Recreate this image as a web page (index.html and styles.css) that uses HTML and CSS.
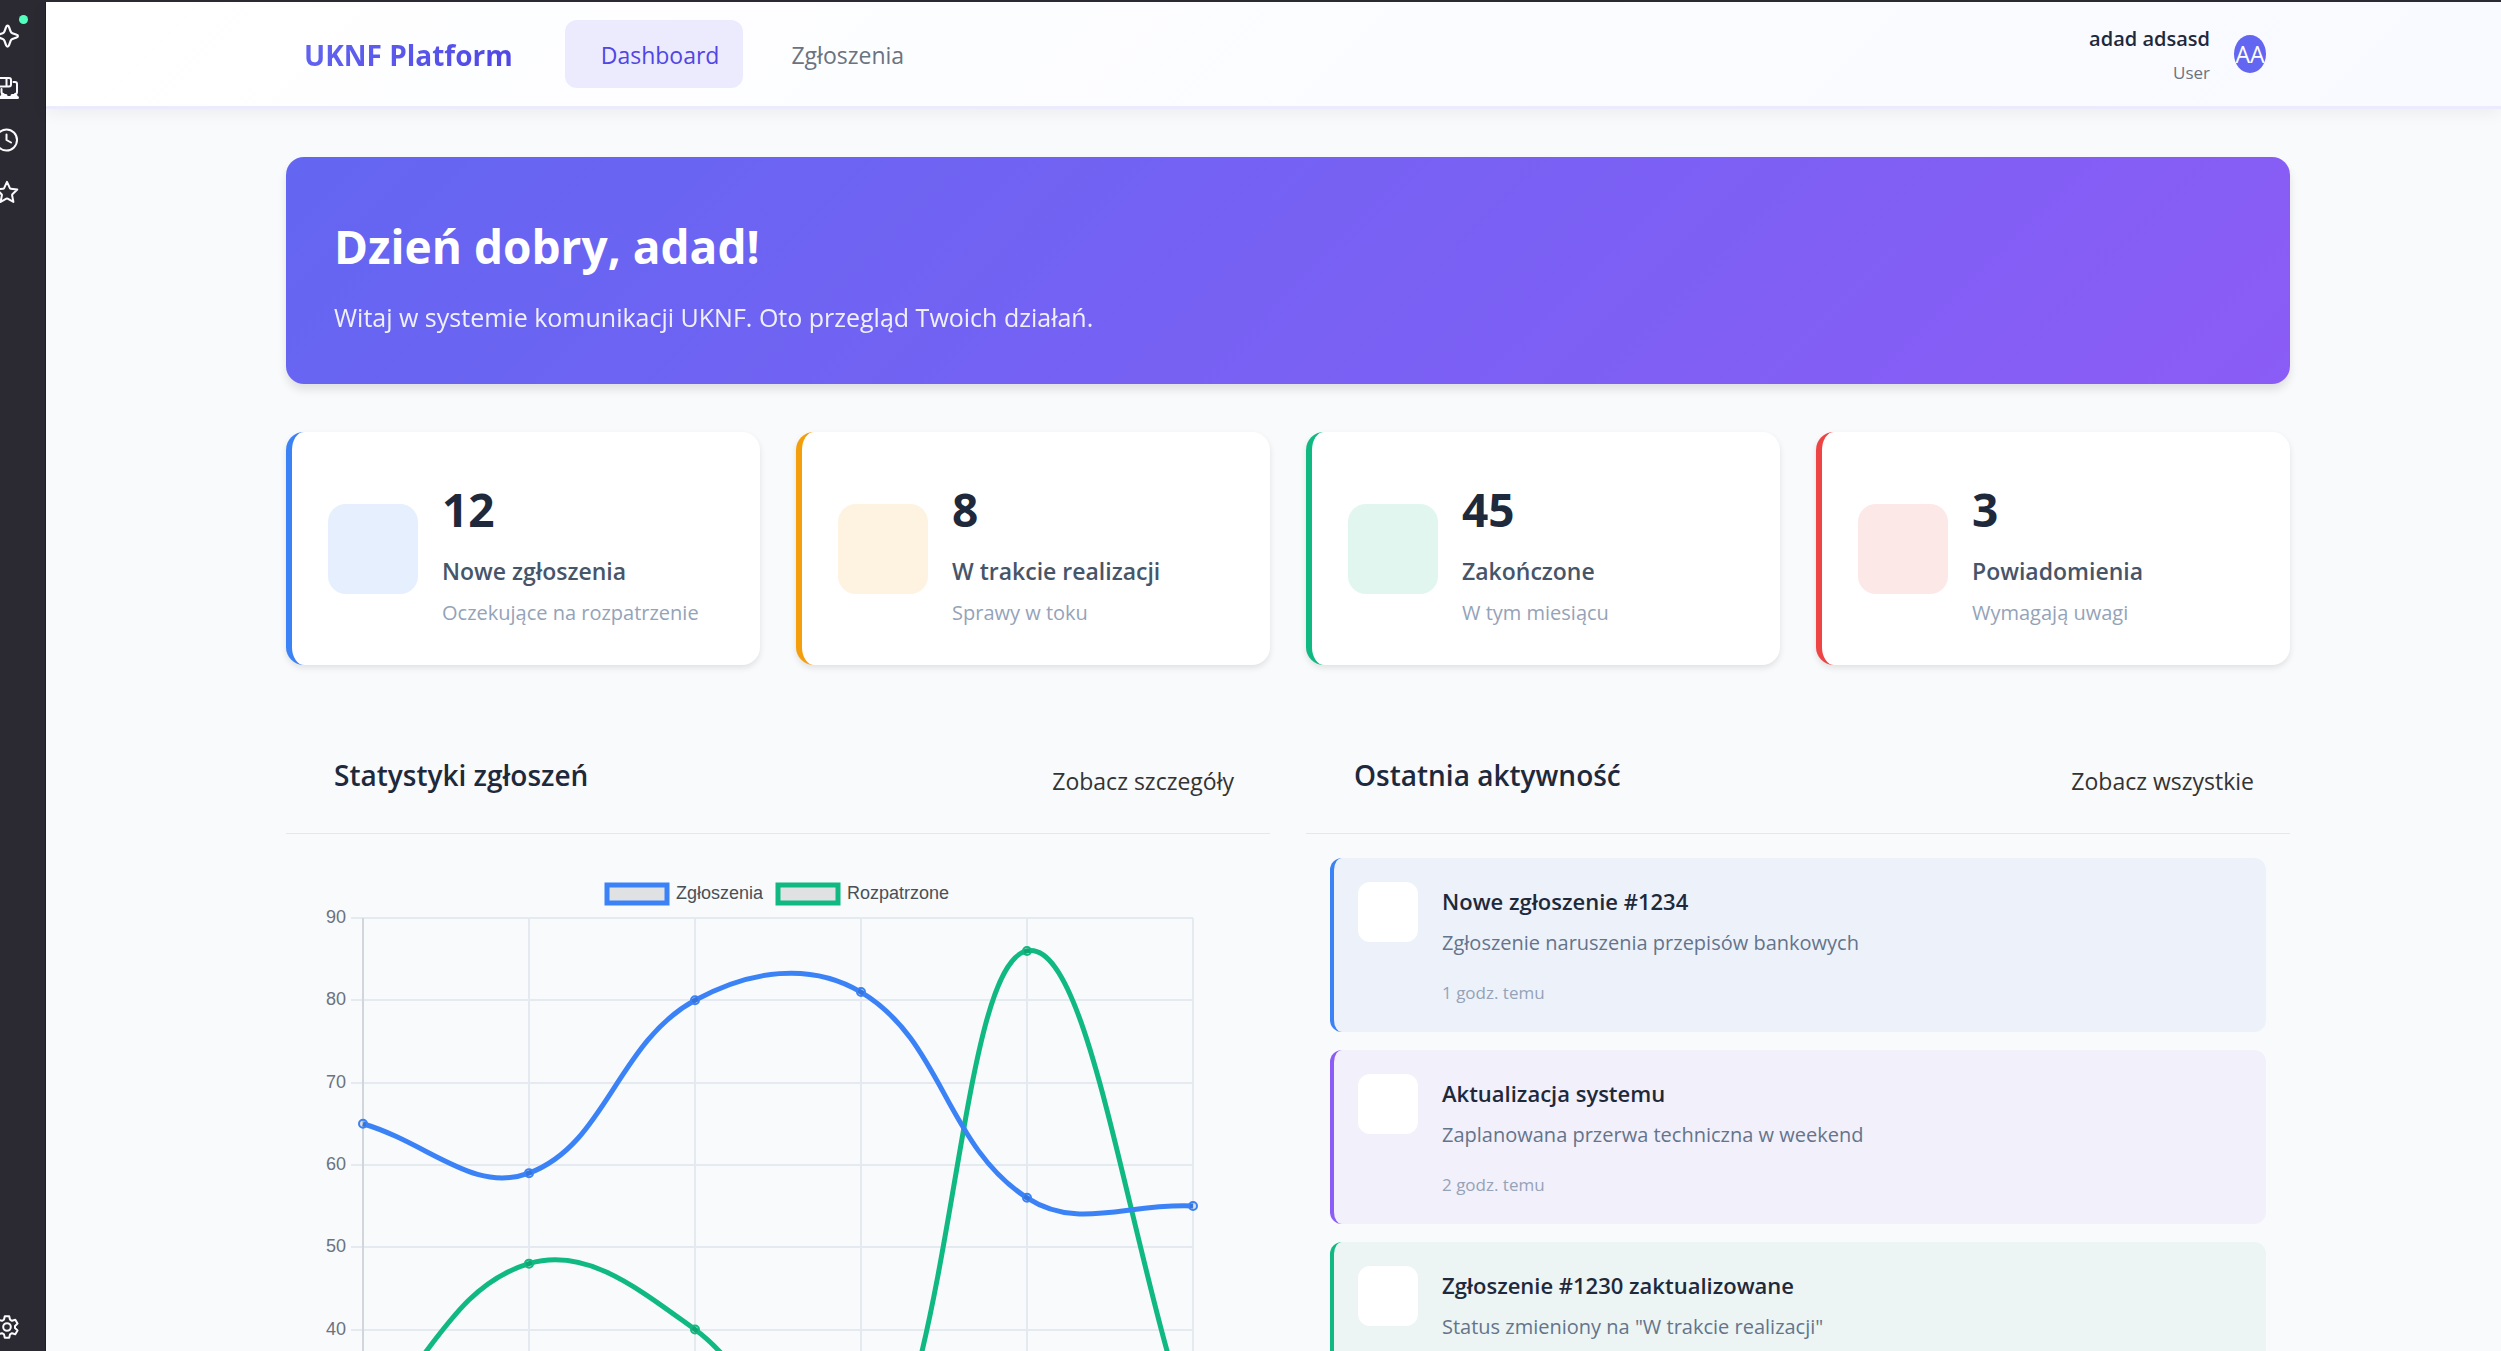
FILE: index.html
```html
<!DOCTYPE html>
<html lang="pl">
<head>
<meta charset="utf-8">
<title>UKNF Platform</title>
<link rel="stylesheet" href="styles.css">
</head>
<body>
<div class="window">
  <aside class="rail">
    <button class="rail-btn" type="button" aria-label="AI">
      <svg class="rail-icon" viewBox="1 1 22 22"><path d="M12.500 2.500c.8 0 1.100.6 1.300 1.200l1.500 4.100c.3.800.800 1.300 1.600 1.600l4 1.500c.7.2 1.100.6 1.100 1.200s-.4 1-1.100 1.200l-4 1.500c-.8.3-1.300.8-1.600 1.600l-1.500 4.100c-.2.6-.5 1.200-1.300 1.200s-1.100-.6-1.300-1.200l-1.500-4.100c-.3-.8-.8-1.300-1.600-1.600l-4-1.500C3.400 13.100 3 12.700 3 12.100s.4-1 1.100-1.200l4-1.500c.8-.3 1.300-.8 1.600-1.600l1.500-4.100c.2-.6.5-1.200 1.300-1.200z"/></svg>
      <span class="rail-dot"></span>
    </button>
    <button class="rail-btn" type="button" aria-label="Urządzenia">
      <svg class="rail-icon" viewBox="0 0 24 24"><path d="M2 2h12a2 2 0 0 1 2 2v4.500a2 2 0 0 1-2 2H2M11.500 2v8.500M18.500 6h1.500a2 2 0 0 1 2 2v8a2 2 0 0 1-2 2M6.500 13v3a2 2 0 0 0 2 2"/><path d="M2 21.500h20.500M7 19.500h4M17 19.500h4" stroke-width="3"/></svg>
    </button>
    <button class="rail-btn" type="button" aria-label="Historia">
      <svg class="rail-icon" viewBox="0 0 24 24"><circle cx="11.500" cy="12" r="10.500"/><path d="M11.500 6.500V12l4.500 2.500"/></svg>
    </button>
    <button class="rail-btn" type="button" aria-label="Zakładki">
      <svg class="rail-icon" viewBox="0 0 24 24"><path d="M12 1.800l2.900 6.400c.2.300.4.500.8.500l6.600.8-4.900 4.800c-.3.300-.4.600-.3 1l1.300 6.600-5.800-3.300c-.4-.2-.8-.2-1.200 0l-5.800 3.300 1.300-6.600c.1-.4 0-.7-.3-1L1.700 9.500l6.600-.8c.4 0 .6-.2.800-.5z"/></svg>
    </button>
    <button class="rail-btn rail-btn-last" type="button" aria-label="Ustawienia">
      <svg class="rail-icon" viewBox="0 0 24 24"><circle cx="12" cy="12" r="3.800"/><path d="M9.800 1.200h4.400l.8 3.400 2 1.200 3.300-1 2.200 3.800-2.500 2.400v2l2.500 2.400-2.200 3.800-3.300-1-2 1.200-.8 3.400H9.800L9 19.400l-2-1.200-3.300 1-2.200-3.800L4 13v-2L1.500 8.600l2.200-3.800 3.300 1 2-1.200z"/></svg>
    </button>
  </aside>
  <div class="page">
    <header class="topbar">
      <a class="brand" href="#">UKNF Platform</a>
      <nav class="nav">
        <a class="nav-link nav-link-active" href="#">Dashboard</a>
        <a class="nav-link" href="#">Zgłoszenia</a>
      </nav>
      <div class="user">
        <div class="user-text">
          <div class="user-name">adad adsasd</div>
          <div class="user-role">User</div>
        </div>
        <span class="avatar">AA</span>
      </div>
    </header>
    <main class="content">
      <section class="hero">
        <h1 class="hero-title">Dzień dobry, adad!</h1>
        <p class="hero-text">Witaj w systemie komunikacji UKNF. Oto przegląd Twoich działań.</p>
      </section>
      <section class="stats">
        <article class="stat stat-blue">
          <div class="stat-icon"></div>
          <div>
            <div class="stat-value">12</div>
            <div class="stat-label">Nowe zgłoszenia</div>
            <div class="stat-note">Oczekujące na rozpatrzenie</div>
          </div>
        </article>
        <article class="stat stat-orange">
          <div class="stat-icon"></div>
          <div>
            <div class="stat-value">8</div>
            <div class="stat-label">W trakcie realizacji</div>
            <div class="stat-note">Sprawy w toku</div>
          </div>
        </article>
        <article class="stat stat-green">
          <div class="stat-icon"></div>
          <div>
            <div class="stat-value">45</div>
            <div class="stat-label">Zakończone</div>
            <div class="stat-note">W tym miesiącu</div>
          </div>
        </article>
        <article class="stat stat-red">
          <div class="stat-icon"></div>
          <div>
            <div class="stat-value">3</div>
            <div class="stat-label">Powiadomienia</div>
            <div class="stat-note">Wymagają uwagi</div>
          </div>
        </article>
      </section>
      <div class="panels">
        <section>
          <div class="panel-head">
            <h2 class="panel-title">Statystyki zgłoszeń</h2>
            <a class="panel-link" href="#">Zobacz szczegóły</a>
          </div>
          <svg class="chart" id="chart" viewBox="0 0 984 760" role="img" aria-label="Statystyki zgłoszeń"></svg>
        </section>
        <section>
          <div class="panel-head">
            <h2 class="panel-title">Ostatnia aktywność</h2>
            <a class="panel-link" href="#">Zobacz wszystkie</a>
          </div>
          <div class="feed">
            <article class="event event-blue">
              <div class="event-icon"></div>
              <div>
                <h3 class="event-title">Nowe zgłoszenie #1234</h3>
                <p class="event-text">Zgłoszenie naruszenia przepisów bankowych</p>
                <p class="event-time">1 godz. temu</p>
              </div>
            </article>
            <article class="event event-purple">
              <div class="event-icon"></div>
              <div>
                <h3 class="event-title">Aktualizacja systemu</h3>
                <p class="event-text">Zaplanowana przerwa techniczna w weekend</p>
                <p class="event-time">2 godz. temu</p>
              </div>
            </article>
            <article class="event event-green">
              <div class="event-icon"></div>
              <div>
                <h3 class="event-title">Zgłoszenie #1230 zaktualizowane</h3>
                <p class="event-text">Status zmieniony na "W trakcie realizacji"</p>
              </div>
            </article>
          </div>
        </section>
      </div>
    </main>
  </div>
</div>
<script src="chart.js"></script>
</body>
</html>
```
FILE: styles.css
```css
* { box-sizing: border-box; margin: 0; }

body {
  font-family: "Segoe UI", "Open Sans", sans-serif;
  font-size: 23px;
  color: #1e293b;
  background: #f8fafc;
}

a { text-decoration: none; }

.window {
  display: flex;
  height: 100vh;
  overflow: hidden;
  border-top: 2px solid #2b2a33;
}

/* Browser rail */
.rail {
  flex: none;
  display: flex;
  flex-direction: column;
  width: 46px;
  padding: 8px 0;
  background: #2b2a33;
  border-right: 1px solid #1f1e26;
}
.rail-btn {
  position: relative;
  height: 52px;
  padding: 0;
  border: 0;
  background: none;
  text-align: left;
}
.rail-btn-last { margin-top: auto; height: 32px; }
.rail-icon {
  display: block;
  width: 24px;
  height: 24px;
  margin-left: -5px;
  fill: none;
  stroke: #fbfbfe;
  stroke-width: 2;
  stroke-linecap: round;
  stroke-linejoin: round;
}
.rail-dot {
  position: absolute;
  top: 5px;
  left: 19px;
  width: 9px;
  height: 9px;
  border-radius: 50%;
  background: #54ffbd;
}

.page { flex: 1; min-width: 0; }

/* Top bar */
.topbar {
  display: flex;
  align-items: center;
  height: 107px;
  padding: 0 235px 0 258px;
  background: linear-gradient(135deg, #ffffff 0%, #f8faff 100%);
  border-bottom: 3px solid #ebebfd;
  box-shadow: 0 4px 16px rgba(0, 0, 0, 0.06);
}
.brand {
  padding-top: 2px;
  font-size: 28px;
  font-weight: 700;
  background: linear-gradient(135deg, #6366f1, #4f46e5);
  background-clip: text;
  -webkit-background-clip: text;
  color: transparent;
}
.nav { display: flex; gap: 12px; margin-left: 52px; }
.nav-link {
  padding: 2px 24px 0 36px;
  line-height: 66px;
  border-radius: 12px;
  color: #6b7280;
}
.nav-link-active { background: #ebebfd; color: #4f46e5; font-weight: 500; }
.user { display: flex; align-items: center; gap: 24px; margin-left: auto; }
.user-text { text-align: right; line-height: 34px; padding-top: 4px; }
.user-name { font-size: 20px; font-weight: 600; }
.user-role { font-size: 17px; color: #6b7280; }
.avatar {
  display: flex;
  justify-content: center;
  width: 32px;
  line-height: 38px;
  border-radius: 50%;
  background: #6366f1;
  color: #fff;
}

/* Content */
.content { padding: 48px 211px 0 240px; }

.hero {
  padding: 48px;
  border-radius: 18px;
  background: linear-gradient(135deg, #6366f1 0%, #8b5cf6 100%);
  box-shadow: 0 6px 9px rgba(0, 0, 0, 0.1);
  color: #fff;
}
.hero-title { font-size: 46px; line-height: 82px; font-weight: 700; }
.hero-text { margin-top: 12px; font-size: 25px; line-height: 37px; opacity: 0.9; }

.stats {
  display: grid;
  grid-template-columns: repeat(4, 1fr);
  gap: 36px;
  margin-top: 48px;
}
.stat {
  display: flex;
  align-items: center;
  gap: 24px;
  padding: 36px;
  border-left: 6px solid;
  border-radius: 18px;
  background: #fff;
  box-shadow: 0 3px 6px rgba(0, 0, 0, 0.1);
}
.stat-icon { flex: none; width: 90px; height: 90px; border-radius: 18px; }
.stat-blue { border-color: #3b82f6; }
.stat-blue .stat-icon { background: #e6effe; }
.stat-orange { border-color: #f59e0b; }
.stat-orange .stat-icon { background: #fef2e0; }
.stat-green { border-color: #10b981; }
.stat-green .stat-icon { background: #e1f6ef; }
.stat-red { border-color: #ef4444; }
.stat-red .stat-icon { background: #fde8e8; }
.stat-value { font-size: 46px; line-height: 82px; font-weight: 700; }
.stat-label { line-height: 42px; font-weight: 600; color: #475569; }
.stat-note { padding-top: 5px; font-size: 20px; line-height: 32px; color: #94a3b8; }

/* Panels */
.panels {
  display: grid;
  grid-template-columns: repeat(2, minmax(0, 1fr));
  gap: 36px;
  margin-top: 48px;
}
.panel-head {
  display: flex;
  align-items: flex-end;
  justify-content: space-between;
  padding: 37px 36px 33px 48px;
  border-bottom: 1px solid #e2e8f0;
}
.panel-title { font-size: 28px; line-height: 50px; font-weight: 600; }
.panel-link { line-height: 38px; color: #333; }

.chart { display: block; width: 100%; }
.chart-label { font: 18px "Liberation Sans", Arial, sans-serif; fill: #6b7280; }
.chart-legend { font: 18px "Liberation Sans", Arial, sans-serif; fill: #495057; }
.chart-grid { stroke: #e5eaf0; stroke-width: 2; }
.chart-axis { stroke: #d0d6dc; stroke-width: 2; }
.chart-line { fill: none; stroke-width: 5; }
.chart-dot { fill: rgba(0, 0, 0, 0.1); stroke-width: 2; }
.chart-key { fill: #e0e1e3; stroke-width: 5; }

.feed { display: flex; flex-direction: column; gap: 18px; padding: 24px; }
.event {
  display: flex;
  gap: 24px;
  padding: 24px;
  border-left: 4px solid;
  border-radius: 12px;
}
.event-blue { border-color: #3b82f6; background: #edf2fa; }
.event-purple { border-color: #8b5cf6; background: #f2f0fa; }
.event-green { border-color: #10b981; background: #ecf4f4; }
.event-icon { flex: none; width: 60px; height: 60px; border-radius: 12px; background: #fff; }
.event-title { font-size: 22px; line-height: 39px; font-weight: 600; }
.event-text { margin-top: 4px; font-size: 20px; line-height: 36px; color: #64748b; }
.event-time { margin-top: 17px; font-size: 17px; line-height: 30px; color: #94a3b8; }
```
FILE: chart.js
```js
const svg = document.getElementById('chart');
const area = { left: 77, right: 907, top: 84, step: 82.3, max: 90, min: 10, lastLabel: 40 };
const series = [
  { name: 'Zgłoszenia', color: '#3b82f6', data: [65, 59, 80, 81, 56, 55], keyX: 321, textX: 390 },
  { name: 'Rozpatrzone', color: '#10b981', data: [28, 48, 40, 19, 86, 27], keyX: 492, textX: 561 }
];

function add(tag, attrs, text) {
  const el = document.createElementNS('http://www.w3.org/2000/svg', tag);
  for (const key in attrs) el.setAttribute(key, attrs[key]);
  if (text) el.textContent = text;
  svg.appendChild(el);
}

const xOf = i => area.left + i * (area.right - area.left) / 5;
const yOf = v => area.top + (area.max - v) / 10 * area.step;
const bottom = yOf(area.min);

for (let v = area.max; v >= area.min; v -= 10) {
  const y = Math.round(yOf(v));
  add('line', { class: 'chart-grid', x1: area.left - 12, x2: area.right, y1: y, y2: y });
  if (v >= area.lastLabel) {
    add('text', { class: 'chart-label', x: area.left - 17, y: y + 5, 'text-anchor': 'end' }, String(v));
  }
}
for (let i = 0; i < 6; i++) {
  const x = Math.round(xOf(i));
  add('line', { class: i ? 'chart-grid' : 'chart-axis', x1: x, x2: x, y1: area.top, y2: bottom });
}

// Cardinal spline, tension 0.4, weighted by the distance to each neighbour
function curve(pts) {
  const handles = pts.map((p, i) => {
    const a = pts[Math.max(i - 1, 0)], b = pts[Math.min(i + 1, pts.length - 1)];
    const da = Math.hypot(p.x - a.x, p.y - a.y), db = Math.hypot(b.x - p.x, b.y - p.y);
    const fa = 0.4 * da / (da + db), fb = 0.4 * db / (da + db);
    const cap = y => Math.min(Math.max(y, area.top), bottom);
    return {
      inX: p.x - fa * (b.x - a.x), inY: cap(p.y - fa * (b.y - a.y)),
      outX: p.x + fb * (b.x - a.x), outY: cap(p.y + fb * (b.y - a.y))
    };
  });
  let d = `M${pts[0].x} ${pts[0].y}`;
  for (let i = 1; i < pts.length; i++) {
    d += `C${handles[i - 1].outX} ${handles[i - 1].outY} ${handles[i].inX} ${handles[i].inY} ${pts[i].x} ${pts[i].y}`;
  }
  return d;
}

for (const s of [...series].reverse()) {
  const pts = s.data.map((v, i) => ({ x: xOf(i), y: yOf(v) }));
  add('path', { class: 'chart-line', stroke: s.color, d: curve(pts) });
  for (const p of pts) add('circle', { class: 'chart-dot', stroke: s.color, cx: p.x, cy: p.y, r: 4 });
}
for (const s of series) {
  add('rect', { class: 'chart-key', stroke: s.color, x: s.keyX, y: 51, width: 60, height: 18 });
  add('text', { class: 'chart-legend', x: s.textX, y: 65 }, s.name);
}
```
